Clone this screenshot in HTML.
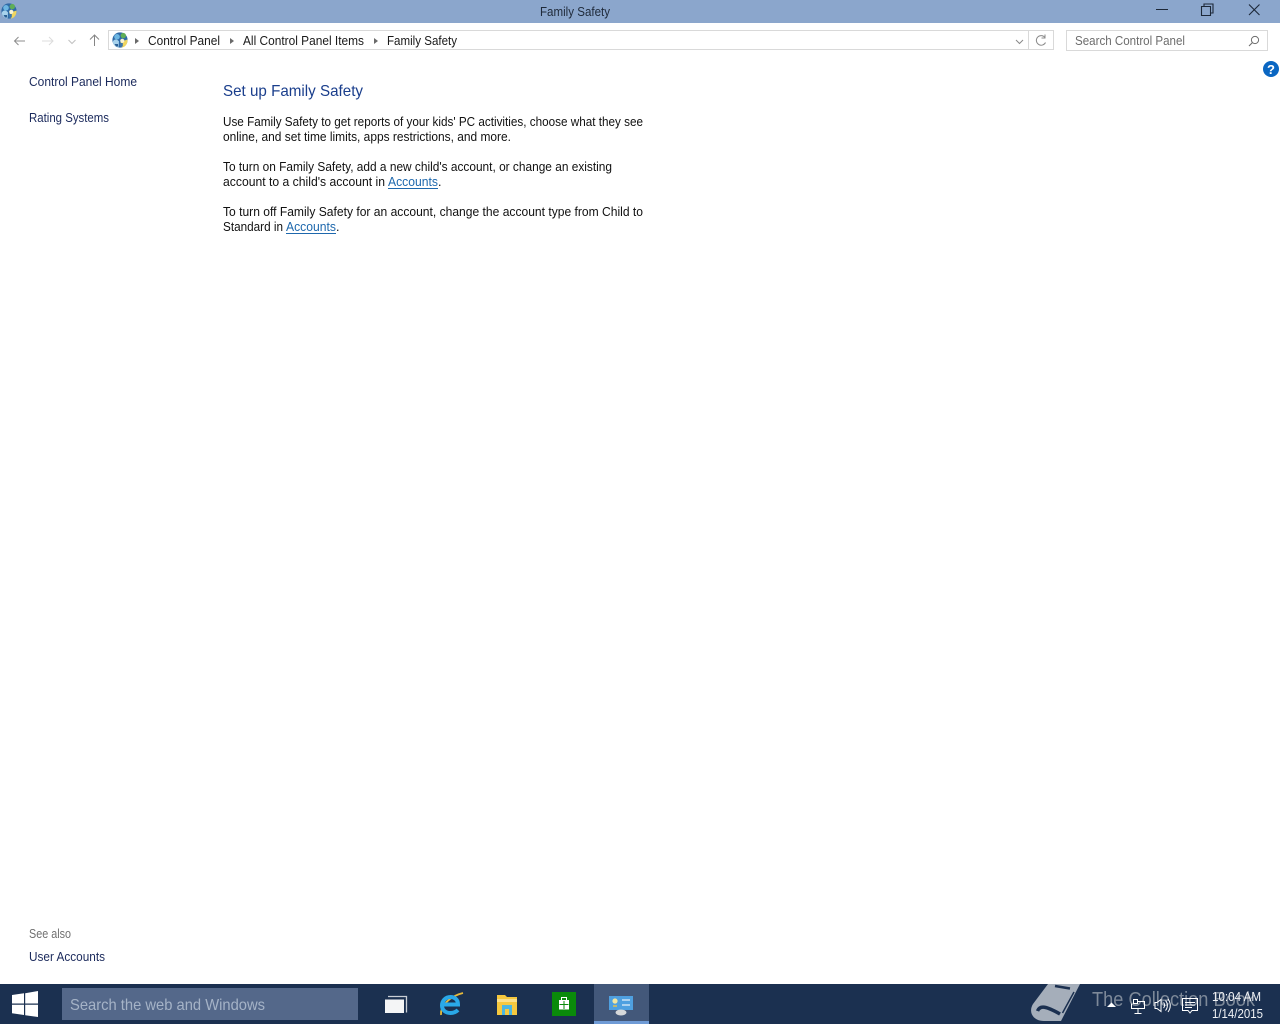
<!DOCTYPE html>
<html lang="en">
<head>
<meta charset="utf-8">
<title>Family Safety</title>
<style>
html,body{margin:0;padding:0;width:1280px;height:1024px;overflow:hidden;background:#fff}
svg{display:block}
text{font-family:"Liberation Sans",sans-serif;font-size:12.5px;white-space:pre}
</style>
</head>
<body>
<svg width="1280" height="1024" viewBox="0 0 1280 1024" xmlns="http://www.w3.org/2000/svg">
<defs>
<g id="cp">
  <circle cx="8" cy="8" r="7.600" fill="#2f6aa6"/>
  <path d="M0.800 10C1.500 7 5 6.500 7 9.500L6.500 15.500C3.500 15.300 1.300 13 0.800 10Z" fill="#a8d2ec"/>
  <path d="M8.500 10L15.400 7.500C16 11 13.800 14.800 10 15.600Z" fill="#efd55e"/>
  <circle cx="5" cy="4.800" r="2.800" fill="#6db6e2"/>
  <circle cx="11.300" cy="3.600" r="2.700" fill="#5fae57"/>
  <circle cx="10.300" cy="8.800" r="2.100" fill="#f7f3d6"/>
  <path d="M7.800 11h3v3.500h-3z" fill="#3c76ad"/>
  <path d="M2.500 12h3.500v2.500h-2z" fill="#2c5f94"/>
</g>
</defs>

<!-- Title bar -->
<rect width="1280" height="23" fill="#8ba6cc"/>
<use href="#cp" x="1" y="3"/>
<text x="540" y="16" fill="#1f2a3a" textLength="70" lengthAdjust="spacingAndGlyphs">Family Safety</text>
<path d="M1156 9.500H1168" stroke="#1d2838" stroke-width="1" fill="none"/>
<path d="M1201.500 6.500h9v9h-9z M1204 6.500v-2.500h9v9h-2.500" stroke="#1d2838" stroke-width="1.100" fill="none"/>
<path d="M1249 4.500L1259.500 15M1259.500 4.500L1249 15" stroke="#1d2838" stroke-width="1.100" fill="none"/>

<!-- Nav buttons -->
<path d="M25 41H14.500M18.500 37L14.500 41L18.500 45" stroke="#8d8d8d" stroke-width="1" fill="none"/>
<path d="M42 41H53M49 37L53 41L49 45" stroke="#dcdcdc" stroke-width="1" fill="none"/>
<path d="M68.500 40L72 43.500L75.500 40" stroke="#c2c2c2" stroke-width="1.100" fill="none"/>
<path d="M94.500 46V35M90 39.500L94.500 35L99 39.500" stroke="#858585" stroke-width="1" fill="none"/>

<!-- Address bar -->
<rect x="108.500" y="30.500" width="945" height="19" fill="#fff" stroke="#d9d9d9"/>
<path d="M1028.500 31V49" stroke="#d9d9d9"/>
<use href="#cp" x="112" y="32"/>
<path d="M135 38L139 41L135 44Z" fill="#6a6a6a"/>
<text x="148" y="45" fill="#1a1a1a" textLength="72" lengthAdjust="spacingAndGlyphs">Control Panel</text>
<path d="M230 38L234 41L230 44Z" fill="#6a6a6a"/>
<text x="243" y="45" fill="#1a1a1a" textLength="121" lengthAdjust="spacingAndGlyphs">All Control Panel Items</text>
<path d="M374 38L378 41L374 44Z" fill="#6a6a6a"/>
<text x="387" y="45" fill="#1a1a1a" textLength="70" lengthAdjust="spacingAndGlyphs">Family Safety</text>
<path d="M1016 40L1019.500 43.500L1023 40" stroke="#8a8a8a" stroke-width="1" fill="none"/>
<path d="M1045 37.500A4.800 4.800 0 1 0 1045.500 42.500M1045 34.500V38H1041.500" stroke="#8a8a8a" stroke-width="1" fill="none"/>

<!-- Search box -->
<rect x="1066.500" y="30.500" width="201" height="20" fill="#fff" stroke="#d9d9d9"/>
<text x="1075" y="45" fill="#6d6d6d" textLength="110" lengthAdjust="spacingAndGlyphs">Search Control Panel</text>
<circle cx="1255" cy="40" r="3.600" fill="none" stroke="#6d6d6d"/>
<path d="M1252.500 42.500L1249 46" stroke="#6d6d6d" stroke-width="1.100"/>

<!-- Help -->
<circle cx="1271" cy="69" r="8" fill="#0a66c2"/>
<text x="1271" y="74" text-anchor="middle" fill="#fff" style="font-size:13px;font-weight:bold">?</text>

<!-- Left pane -->
<text x="29" y="86" fill="#1b2a5c" textLength="108" lengthAdjust="spacingAndGlyphs">Control Panel Home</text>
<text x="29" y="122" fill="#1b2a5c" textLength="80" lengthAdjust="spacingAndGlyphs">Rating Systems</text>
<text x="29" y="938" fill="#707070" textLength="42" lengthAdjust="spacingAndGlyphs">See also</text>
<text x="29" y="961" fill="#1b2a5c" textLength="76" lengthAdjust="spacingAndGlyphs">User Accounts</text>

<!-- Content -->
<text x="223" y="96" fill="#1a3e8c" style="font-size:16px" textLength="140" lengthAdjust="spacingAndGlyphs">Set up Family Safety</text>
<text x="223" y="126" fill="#111" textLength="420" lengthAdjust="spacingAndGlyphs">Use Family Safety to get reports of your kids' PC activities, choose what they see</text>
<text x="223" y="141" fill="#111" textLength="288" lengthAdjust="spacingAndGlyphs">online, and set time limits, apps restrictions, and more.</text>
<text x="223" y="171" fill="#111" textLength="389" lengthAdjust="spacingAndGlyphs">To turn on Family Safety, add a new child's account, or change an existing</text>
<text x="223" y="186" fill="#111" textLength="162" lengthAdjust="spacingAndGlyphs">account to a child's account in</text>
<text x="388" y="186" fill="#1e68ad" textLength="50" lengthAdjust="spacingAndGlyphs">Accounts</text>
<path d="M388 188.500H438" stroke="#1e68ad"/>
<text x="438" y="186" fill="#111">.</text>
<text x="223" y="216" fill="#111" textLength="420" lengthAdjust="spacingAndGlyphs">To turn off Family Safety for an account, change the account type from Child to</text>
<text x="223" y="231" fill="#111" textLength="60" lengthAdjust="spacingAndGlyphs">Standard in</text>
<text x="286" y="231" fill="#1e68ad" textLength="50" lengthAdjust="spacingAndGlyphs">Accounts</text>
<path d="M286 233.500H336" stroke="#1e68ad"/>
<text x="336" y="231" fill="#111">.</text>

<!-- Taskbar -->
<rect y="984" width="1280" height="40" fill="#1b3050"/>
<path d="M12 995L24 993.300V1003.500H12Z M25.200 993.200L38 991V1003.500H25.200Z M12 1004.700H24V1015L12 1013.300Z M25.200 1004.700H38V1017L25.200 1015.200Z" fill="#fff"/>
<rect x="62" y="988" width="296" height="32" fill="#54688a"/>
<text x="70" y="1010" fill="#a5b3c7" style="font-size:16px" textLength="195" lengthAdjust="spacingAndGlyphs">Search the web and Windows</text>

<!-- Task view -->
<path d="M388 996.500h18.500v16" fill="none" stroke="#c9ced6" stroke-width="1.300"/>
<rect x="385" y="999.500" width="19" height="13.500" fill="#f4f5f6"/>

<!-- IE -->
<path d="M441 1015C440 1006 450 996 463 993" fill="none" stroke="#e6b93a" stroke-width="1.800"/>
<path d="M443 1004.500H458C458 999 454 997 450.500 997C445.500 997 442 1001 442 1005.500C442 1010.500 446 1013 450.500 1013C453.500 1013 456 1012 458 1010" fill="none" stroke="#2aa8e8" stroke-width="4"/>

<!-- Explorer -->
<path d="M497 995h8l2 2h10v18h-20z" fill="#f6c83e"/>
<rect x="497" y="999" width="20" height="3" fill="#fbe08a"/>
<rect x="502" y="1005" width="10" height="10" fill="#4bb6e0"/>
<rect x="505" y="1009" width="4" height="6" fill="#f6c83e"/>

<!-- Store -->
<rect x="552" y="992" width="24" height="24" fill="#0a8a0a"/>
<path d="M559 1000h10v9.500h-10z" fill="#fff"/>
<path d="M561.500 1000v-2.500h5v2.500" fill="none" stroke="#fff"/>
<path d="M564 1001v8M559.500 1004.500h9" stroke="#0a8a0a"/>

<!-- Active app -->
<rect x="594" y="984" width="55" height="40" fill="#43587a"/>
<rect x="594" y="1021" width="55" height="3" fill="#6f9bd6"/>
<rect x="609" y="996" width="24" height="14" fill="#4fa0e0"/>
<circle cx="615" cy="1001" r="2.600" fill="#f2e6a0"/>
<path d="M613 1006h4" stroke="#e0c050" stroke-width="1.500"/>
<path d="M622 1000h8M622 1005h8" stroke="#e4f0fa" stroke-width="1.300"/>
<ellipse cx="621" cy="1012.500" rx="5.500" ry="3" fill="#d6d8da"/>

<!-- Watermark -->
<path d="M1048 984H1080L1061 1021H1044C1033 1021 1028 1012 1033 1004Z" fill="#a5aeba"/>
<path d="M1055 986L1070 988.500" stroke="#1b3050" stroke-width="2.500" fill="none"/>
<path d="M1074 992L1062.500 1013" stroke="#1b3050" stroke-width="1.500" fill="none"/>
<path d="M1037.500 1011C1040 1005 1046 1006 1060 1014" stroke="#1b3050" stroke-width="3.500" fill="none"/>
<text x="1092" y="1006" fill="#7d8999" style="font-size:20px" textLength="163" lengthAdjust="spacingAndGlyphs">The Collection Book</text>

<!-- Tray -->
<path d="M1107 1007L1111.500 1002.500L1116 1007Z" fill="#fff"/>
<g fill="none" stroke="#fff" stroke-width="1">
<rect x="1133.500" y="999.500" width="4" height="4"/>
<path d="M1137.500 1001.500H1144.500V1008.500H1131.500V1003.500"/>
<path d="M1138 1008.500V1013M1134.500 1013.500H1141.500"/>
<path d="M1155 1002.500h2l4-3v12l-4-3h-2z"/>
<path d="M1163.500 1002.500c1.500 1.500 1.500 4 0 5.500M1165.500 1000.500c2.500 3 2.500 7 0 10M1168 999c3 4 3 9 0 13"/>
<path d="M1182.500 998.500H1197.500V1010.500H1192L1190 1013L1188 1010.500H1182.500Z"/>
<path d="M1185 1002.500H1195M1185 1005H1195M1185 1007.500H1192"/>
</g>
<text x="1212" y="1001" fill="#f0f2f5" textLength="49" lengthAdjust="spacingAndGlyphs">10:04 AM</text>
<text x="1212" y="1018" fill="#f0f2f5" textLength="51" lengthAdjust="spacingAndGlyphs">1/14/2015</text>
</svg>
</body>
</html>
